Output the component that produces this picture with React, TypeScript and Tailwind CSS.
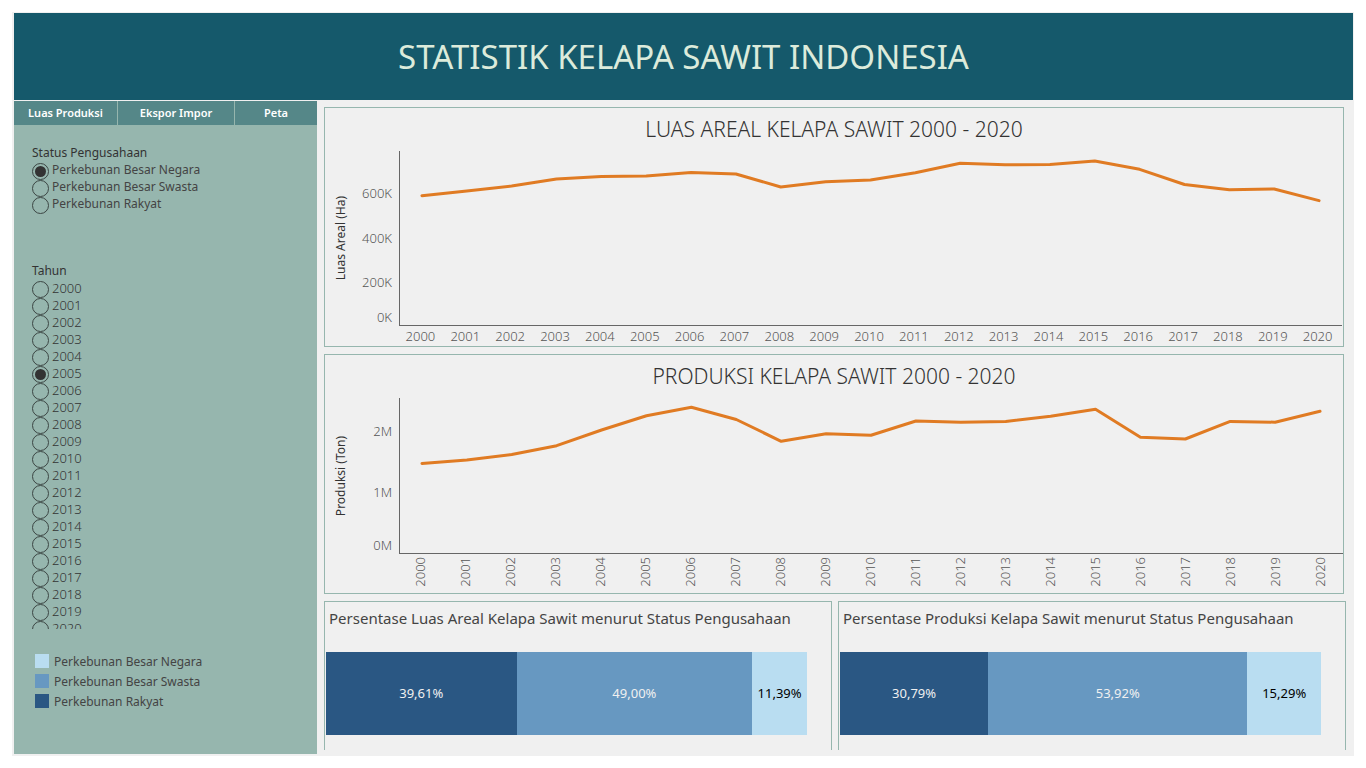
import { useState } from "react";

const STATUSES = ["Perkebunan Besar Negara", "Perkebunan Besar Swasta", "Perkebunan Rakyat"];
const YEARS = Array.from({ length: 21 }, (_, i) => String(2000 + i));

const LEGEND = [
  { label: "Perkebunan Besar Negara", color: "bg-[#b9ddf1]" },
  { label: "Perkebunan Besar Swasta", color: "bg-[#6798c1]" },
  { label: "Perkebunan Rakyat", color: "bg-[#2a5783]" },
];

// Vertical positions of the yearly values inside each plot, in plot units.
const AREA_POINTS = [44.7, 40, 35, 28, 25.5, 25, 21.5, 23, 36, 30.7, 29, 21.7, 12.3, 13.7, 13.5, 10, 18.3, 33.5, 38.7, 38, 49.6];
const PRODUCTION_POINTS = [65.5, 62, 56.5, 47.7, 32, 17.8, 9.3, 21.5, 43.3, 35.8, 37.3, 23, 24.3, 23.5, 18.3, 11.2, 39.2, 41, 23.4, 24.2, 13.3];

type RadioListProps = { name: string; options: string[]; value: string; onChange: (v: string) => void };

function RadioList({ name, options, value, onChange }: RadioListProps) {
  return (
    <>
      {options.map((o) => (
        <label key={o} className="flex h-[17px] items-start gap-[3px]">
          <input
            type="radio"
            name={name}
            value={o}
            checked={value === o}
            onChange={() => onChange(o)}
            className="mt-px grid size-[17px] shrink-0 appearance-none place-items-center rounded-full border border-[#3c4644] checked:before:size-[11px] checked:before:rounded-full checked:before:bg-[#333333] checked:before:content-['']"
          />
          <span className="leading-4">{o}</span>
        </label>
      ))}
    </>
  );
}

type LinePlotProps = { points: number[]; height: number; label: string };

function LinePlot({ points, height, label }: LinePlotProps) {
  const coords = points.map((y, i) => `${i * 45 + 22},${y}`).join(" ");
  return (
    <svg
      role="img"
      aria-label={label}
      viewBox={`0 0 945 ${height}`}
      preserveAspectRatio="none"
      className="block h-full w-full"
    >
      <polyline
        points={coords}
        fill="none"
        stroke="#e07b23"
        strokeWidth="3"
        strokeLinecap="round"
        strokeLinejoin="round"
        vectorEffect="non-scaling-stroke"
      />
    </svg>
  );
}

type ShareProps = { title: string; shares: { label: string; value: number; style: string }[] };

function SharePanel({ title, shares }: ShareProps) {
  return (
    <section className="h-[149px] min-w-0 flex-1 border border-b-0 border-[#96b6ae]">
      <h2 className="h-[50px] pt-1 pl-1 text-[15px] leading-6 whitespace-nowrap text-[#444444]">{title}</h2>
      <div className="mr-6 ml-px flex h-[83px] text-[13px]">
        {shares.map((s) => (
          <div key={s.label} className={`flex items-center justify-center ${s.style}`} style={{ width: `${s.value}%` }}>
            {s.label}
          </div>
        ))}
      </div>
    </section>
  );
}

export default function App() {
  const [status, setStatus] = useState(STATUSES[0]);
  const [year, setYear] = useState("2005");

  return (
    <div className="bg-white p-3 font-['Noto_Sans',sans-serif]">
      <div className="bg-[#f0f0f0] pt-px pr-px pb-0.5 pl-0.5">
        <header className="flex h-[87px] items-center justify-center bg-[#15596b]">
          <h1 className="text-[33px] text-[#dcebdb]">STATISTIK KELAPA SAWIT INDONESIA</h1>
        </header>

        <div className="mt-px flex">
          <aside className="w-[303px] shrink-0 bg-[#96b6ae] text-xs text-[#333333]">
            <nav className="flex h-6 gap-px text-[11px] font-semibold text-white">
              <button className="w-[103px] bg-[#558788]">Luas Produksi</button>
              <button className="w-[116px] bg-[#558788]">Ekspor Impor</button>
              <button className="flex-1 bg-[#558788]">Peta</button>
            </nav>

            <fieldset className="mt-5 ml-[18px]">
              <legend className="h-[17px] leading-4">Status Pengusahaan</legend>
              <div className="text-[#444444]">
                <RadioList name="status" options={STATUSES} value={status} onChange={setStatus} />
              </div>
            </fieldset>

            <fieldset className="mt-[50px] ml-[18px]">
              <legend className="h-[17px] leading-4">Tahun</legend>
              <div className="h-[349px] overflow-hidden text-[13px] font-light">
                <RadioList name="tahun" options={YEARS} value={year} onChange={setYear} />
              </div>
            </fieldset>

            <ul className="mt-[22px] mb-[43px] ml-[21px] text-[#444444]">
              {LEGEND.map((l) => (
                <li key={l.label} className="flex h-5 items-center gap-[5px]">
                  <span className={`size-3.5 ${l.color}`} />
                  <span className="pt-0.5 leading-4">{l.label}</span>
                </li>
              ))}
            </ul>
          </aside>

          <main className="flex min-w-0 flex-1 flex-col gap-[7px] pt-1.5 pr-[7px] pl-[7px]">
            <section className="mr-0.5 h-60 border border-[#96b6ae]">
              <h2 className="h-[43px] pt-[5px] text-center text-[21px] leading-8 font-light text-[#333333]">
                LUAS AREAL KELAPA SAWIT 2000 - 2020
              </h2>
              <div className="flex h-[175px] pr-px">
                <div className="flex w-8 items-center justify-center text-xs text-[#333333]">
                  <span className="rotate-180 leading-4 whitespace-nowrap [writing-mode:vertical-rl]">Luas Areal (Ha)</span>
                </div>
                <div className="grid w-[42px] grid-rows-[45px_44px_35px_16px] pt-[34px] pr-[7px] text-right text-[13px] leading-4 font-light text-[#555555]">
                  <span>600K</span>
                  <span>400K</span>
                  <span>200K</span>
                  <span>0K</span>
                </div>
                <div className="min-w-0 flex-1 border-b border-l border-[#666666]">
                  <LinePlot points={AREA_POINTS} height={174} label="Luas areal kelapa sawit" />
                </div>
              </div>
              <div className="flex h-5 items-center pt-px pr-[3px] pl-[73px] text-center text-[13px] font-light text-[#555555]">
                {YEARS.map((y) => (
                  <span key={y} className="min-w-0 flex-1">{y}</span>
                ))}
              </div>
            </section>

            <section className="mr-0.5 h-60 border border-[#96b6ae]">
              <h2 className="h-[43px] pt-[5px] text-center text-[21px] leading-8 font-light text-[#333333]">
                PRODUKSI KELAPA SAWIT 2000 - 2020
              </h2>
              <div className="flex h-[156px]">
                <div className="flex w-8 items-center justify-center text-xs text-[#333333]">
                  <span className="rotate-180 leading-4 whitespace-nowrap [writing-mode:vertical-rl]">Produksi (Ton)</span>
                </div>
                <div className="grid w-[42px] grid-rows-[61px_53px_16px] pt-[25px] pr-[7px] text-right text-[13px] leading-4 font-light text-[#555555]">
                  <span>2M</span>
                  <span>1M</span>
                  <span>0M</span>
                </div>
                <div className="min-w-0 flex-1 border-b border-l border-[#666666]">
                  <LinePlot points={PRODUCTION_POINTS} height={155} label="Produksi kelapa sawit" />
                </div>
              </div>
              <div className="flex h-9 items-center pr-px pl-[73px] text-[13px] font-light text-[#555555]">
                {YEARS.map((y) => (
                  <span key={y} className="flex min-w-0 flex-1 justify-center">
                    <span className="rotate-180 leading-4 [writing-mode:vertical-rl]">{y}</span>
                  </span>
                ))}
              </div>
            </section>

            <div className="flex gap-1.5">
              <SharePanel
                title="Persentase Luas Areal Kelapa Sawit menurut Status Pengusahaan"
                shares={[
                  { label: "39,61%", value: 39.61, style: "bg-[#2a5783] text-[#f0f0f0]" },
                  { label: "49,00%", value: 49, style: "bg-[#6798c1] text-[#f0f0f0]" },
                  { label: "11,39%", value: 11.39, style: "bg-[#b9ddf1] text-black" },
                ]}
              />
              <SharePanel
                title="Persentase Produksi Kelapa Sawit menurut Status Pengusahaan"
                shares={[
                  { label: "30,79%", value: 30.79, style: "bg-[#2a5783] text-[#f0f0f0]" },
                  { label: "53,92%", value: 53.92, style: "bg-[#6798c1] text-[#f0f0f0]" },
                  { label: "15,29%", value: 15.29, style: "bg-[#b9ddf1] text-black" },
                ]}
              />
            </div>
          </main>
        </div>
      </div>
    </div>
  );
}
